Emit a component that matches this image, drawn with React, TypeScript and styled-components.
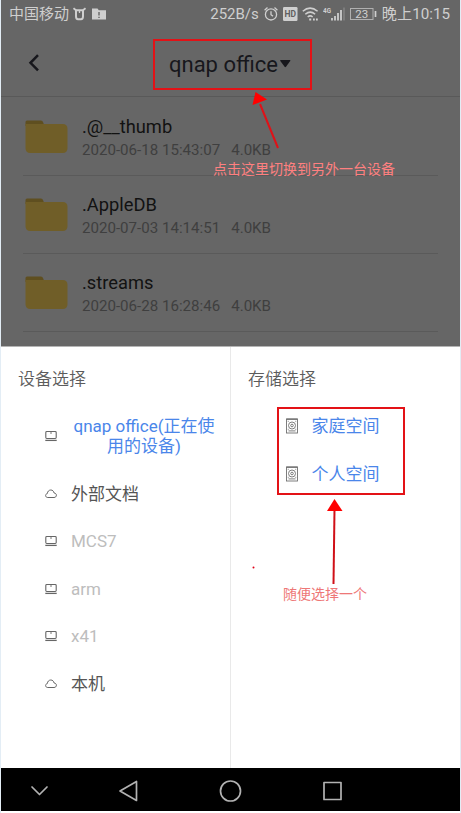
import React from 'react';
import styled, { createGlobalStyle } from 'styled-components';

const GlobalStyle = createGlobalStyle`
  * { box-sizing: border-box; }
  body {
    margin: 0;
    background: #fff;
    font-family: Roboto, "Noto Sans CJK SC", sans-serif;
  }
`;

const Screen = styled.div`
  position: relative;
  display: flex;
  flex-direction: column;
  width: 461px;
  height: 813px;
  padding-bottom: 2px;
  border-left: 1px solid #e3edf5;
  border-right: 1px solid #e3edf5;
  overflow: hidden;
`;

const StatusBar = styled.div`
  display: flex;
  align-items: center;
  justify-content: space-between;
  flex: 0 0 28px;
  padding: 0 10px 0 8px;
  background: #666;
  color: #cfcfcf;
  font-size: 15px;
  line-height: 28px;
  white-space: nowrap;
`;

const StatusGroup = styled.div`
  display: flex;
  align-items: center;
  height: 28px;
`;

const StatusIcon = styled.svg<{ $gap: number }>`
  flex: none;
  margin-left: ${(p) => p.$gap}px;
`;

const Clock = styled.span`
  margin-left: 5px;
  font-size: 15.2px;
`;

const Header = styled.header`
  display: flex;
  align-items: center;
  flex: 0 0 69px;
  padding: 2px 0 0 26px;
  background: #666;
  border-bottom: 1px solid #595959;
`;

const Title = styled.div`
  display: flex;
  align-items: center;
  gap: 2px;
  margin-left: 128px;
  padding-top: 3px;
  color: #17171c;
  font-size: 22px;
  line-height: 28px;
  white-space: nowrap;
  svg { margin-bottom: 2px; }
`;

const FileList = styled.div`
  flex: 0 0 249px;
  padding: 0 22px;
  background: #666;
`;

const FileRow = styled.div`
  display: flex;
  height: 78px;
  padding: 0 2px;
  border-bottom: 1px solid #5a5a5a;
  &:first-child { height: 79px; }
  &:first-child > * { margin-top: 1px; }
`;

const Folder = styled.svg`
  flex: none;
`;

const FileText = styled.div`
  padding: 18px 0 0 14px;
`;

const FileName = styled.div`
  color: #121212;
  font-size: 18.3px;
  line-height: 22px;
`;

const FileMeta = styled.div`
  display: flex;
  gap: 11px;
  margin-top: 2px;
  color: #3f3f3f;
  font-size: 15.1px;
  line-height: 20px;
`;

const Sheet = styled.div`
  display: flex;
  flex: 0 0 422px;
  background: #fff;
  border-top: 1px solid #b4b4b4;
`;

const Column = styled.section<{ $width: number }>`
  width: ${(p) => p.$width}px;
  padding: 20px 0 0 17px;
  & + & { border-left: 1px solid #e9e9e9; }
`;

const Heading = styled.h2`
  margin: 0;
  color: #5c5c5c;
  font-weight: 350;
  font-size: 17px;
  line-height: 24px;
`;

const Options = styled.div<{ $indent: number; $top: number; $gap: number }>`
  display: flex;
  flex-direction: column;
  padding: ${(p) => p.$top}px 0 0 ${(p) => p.$indent}px;
  gap: ${(p) => p.$gap}px;
`;

const tones = { active: '#4a86ea', normal: '#555', offline: '#bdbdbd' };

const Option = styled.div<{ $gap: number; $tone: keyof typeof tones }>`
  display: flex;
  align-items: center;
  gap: ${(p) => p.$gap}px;
  color: ${(p) => tones[p.$tone]};
  font-size: 17px;
  line-height: 20px;
  svg { flex: none; }
`;

const Label = styled.span<{ $wrap?: boolean }>`
  ${(p) => (p.$wrap ? 'width: 146px; text-align: center; word-break: break-all;' : 'white-space: nowrap;')}
`;

const NavBar = styled.nav`
  display: flex;
  align-items: center;
  flex: 0 0 43px;
  padding: 3px 0 0 28px;
  background: #000;
`;

const NavIcon = styled.svg<{ $gap?: number }>`
  margin-left: ${(p) => p.$gap ?? 0}px;
  fill: none;
  stroke: #b2b2b2;
  stroke-width: 1.7;
  stroke-linejoin: round;
  stroke-linecap: round;
`;

const Frame = styled.div<{ $x: number; $y: number; $w: number; $h: number }>`
  position: absolute;
  left: ${(p) => p.$x - 1}px;
  top: ${(p) => p.$y}px;
  width: ${(p) => p.$w}px;
  height: ${(p) => p.$h}px;
  border: 2px solid #e31217;
`;

const Note = styled.div<{ $x: number; $y: number; $color: string }>`
  position: absolute;
  left: ${(p) => p.$x - 1}px;
  top: ${(p) => p.$y}px;
  color: ${(p) => p.$color};
  font-size: 14px;
  line-height: 20px;
  white-space: nowrap;
`;

const Arrows = styled.svg`
  position: absolute;
  left: -1px;
  top: 0;
  pointer-events: none;
`;

const FolderIcon = () => (
  <Folder width="43" height="77" viewBox="0 0 43 77">
    <path d="M.5 24q0-1.500 1.500-1.500h14q1.500 0 2 1.500l1.500 4H.5z" fill="#5f4f20" />
    <path d="M.5 26h37q5 0 5 5v19q0 5-5 5h-32q-5 0-5-5z" fill="#705e28" />
  </Folder>
);

const ComputerIcon = () => (
  <svg width="12" height="12" viewBox="0 0 12 12" fill="none" stroke="#666">
    <rect x="0.800" y="1.500" width="10.400" height="7" rx="0.900" strokeWidth="1.100" />
    <path d="M0.300 10.400h11.400" strokeWidth="1.300" />
    <path d="M6 2v2" strokeWidth="0.900" />
  </svg>
);

const CloudIcon = () => (
  <svg width="12" height="12" viewBox="0 0 12 12" fill="none" stroke="#666">
    <path d="M2.800 9.500C1.400 9.500.6 8.600.6 7.500c0-1 .7-1.700 1.700-1.900C2.500 3.400 4 2 5.800 2c1.700 0 2.900 1.200 3.300 3 1.400.2 2.300 1 2.300 2.200 0 1.400-1 2.300-2.400 2.300z" />
  </svg>
);

const DiskIcon = () => (
  <svg width="12" height="16" viewBox="0 0 12 16" fill="none" stroke="#707070">
    <rect x="0.500" y="1" width="11" height="14" strokeWidth="0.900" />
    <path d="M0.500 1.200h11" strokeWidth="1.300" />
    <circle cx="6" cy="7.500" r="3.500" strokeWidth="0.900" />
    <circle cx="6" cy="7.500" r="1.300" strokeWidth="0.900" />
    <path d="M2.500 12.900h7" strokeWidth="0.900" />
    <path d="M1.800 3.300h.8M9.400 3.300h.8M1.800 11.300h.8M9.400 11.300h.8" />
  </svg>
);

const files = [
  { name: '.@__thumb', date: '2020-06-18 15:43:07' },
  { name: '.AppleDB', date: '2020-07-03 14:14:51' },
  { name: '.streams', date: '2020-06-28 16:28:46' },
];

const devices: { name: string; cloud?: boolean; tone: keyof typeof tones }[] = [
  { name: 'qnap office(正在使用的设备)', tone: 'active' },
  { name: '外部文档', cloud: true, tone: 'normal' },
  { name: 'MCS7', tone: 'offline' },
  { name: 'arm', tone: 'offline' },
  { name: 'x41', tone: 'offline' },
  { name: '本机', cloud: true, tone: 'normal' },
];

export default function App() {
  return (
    <>
      <GlobalStyle />
      <Screen>
        <StatusBar>
          <StatusGroup>
            <span>中国移动</span>
            <StatusIcon $gap={4} width="13" height="14" viewBox="0 0 13 14" fill="none" stroke="#cfcfcf">
              <path d="M3 3.200h7v6q0 3-2 3H5q-2 0-2-3z" strokeWidth="2" />
              <path d="M.5 1.200l2.500 2M12.500 1.200l-2.500 2" strokeWidth="1.800" />
              <path d="M6.500 3v3" strokeWidth="1.300" />
            </StatusIcon>
            <StatusIcon $gap={6} width="14" height="12" viewBox="0 0 14 12">
              <path d="M0 .5h5.500l1.300 1.800H14V11.500H0z" fill="#cfcfcf" />
              <path d="M7 4v3.500M7 8.700v1.300" stroke="#666" strokeWidth="1.400" />
            </StatusIcon>
          </StatusGroup>
          <StatusGroup>
            <span>252B/s</span>
            <StatusIcon $gap={5} width="14" height="14" viewBox="0 0 14 14" fill="none" stroke="#cfcfcf" strokeWidth="1.300">
              <circle cx="7" cy="7.400" r="5.600" />
              <path d="M7 4.300v3.400l2 1.400M.6 3.300L3.500.6M13.400 3.300L10.500.6" />
            </StatusIcon>
            <StatusIcon $gap={5} width="15" height="14" viewBox="0 0 15 14">
              <rect width="14.500" height="14" rx="1.200" fill="#cfcfcf" />
              <text x="7.250" y="10.200" textAnchor="middle" fontSize="8.500" fontWeight="700" fill="#606060">HD</text>
            </StatusIcon>
            <StatusIcon $gap={4} width="17" height="14" viewBox="0 0 17 14" fill="none" stroke="#cfcfcf" strokeWidth="1.500">
              <path d="M.8 4.300q7.200-6.400 14.800 0M3.300 7.300q5-4.400 9.800 0M5.700 10q2.500-2.200 5 0" />
              <path d="M7.200 12.500h2M11 12.500h1.800M14 12.500h1.800" strokeWidth="1.900" />
            </StatusIcon>
            <StatusIcon $gap={4} width="23" height="18" viewBox="0 0 23 18">
              <text x="0" y="7.500" fontSize="8" fontWeight="700" fill="#cfcfcf" textLength="8" lengthAdjust="spacingAndGlyphs">4G</text>
              <path d="M9 13v2.500M12 11v4.500M15 8v7.500M18 5v10.500" stroke="#cfcfcf" strokeWidth="1.800" />
              <path d="M21 2.500v13" stroke="#898989" strokeWidth="1.300" />
            </StatusIcon>
            <StatusIcon $gap={4} width="27" height="14" viewBox="0 0 27 14" fill="none" stroke="#b0b0b0">
              <rect x=".5" y="1.500" width="22.500" height="11" />
              <path d="M25.500 4v6" stroke="#cfcfcf" strokeWidth="1.700" />
              <text x="11.700" y="11.200" textAnchor="middle" fontSize="11.500" fill="#cfcfcf" stroke="none">23</text>
            </StatusIcon>
            <Clock>晚上10:15</Clock>
          </StatusGroup>
        </StatusBar>
        <Header>
          <svg width="14" height="20" viewBox="0 0 14 20" fill="none" stroke="#17171c" strokeWidth="2.500">
            <path d="M11 2.200L3.500 9.800l7.500 7.600" />
          </svg>
          <Title>
            qnap office
            <svg width="11" height="10" viewBox="0 0 11 10"><path d="M.5 1h9.500q.6.200.2.900L6 7.800q-.7.800-1.400 0L.3 1.900Q0 1.200.5 1z" fill="#17171c" /></svg>
          </Title>
        </Header>
        <FileList>
          {files.map((f) => (
            <FileRow key={f.name}>
              <FolderIcon />
              <FileText>
                <FileName>{f.name}</FileName>
                <FileMeta><span>{f.date}</span><span>4.0KB</span></FileMeta>
              </FileText>
            </FileRow>
          ))}
        </FileList>
        <Sheet>
          <Column $width={229}>
            <Heading>设备选择</Heading>
            <Options $indent={27} $top={25} $gap={27.6}>
              {devices.map((d, i) => (
                <Option key={d.name} $gap={14} $tone={d.tone}>
                  {d.cloud ? <CloudIcon /> : <ComputerIcon />}
                  <Label $wrap={i === 0}>{d.name}</Label>
                </Option>
              ))}
            </Options>
          </Column>
          <Column $width={230}>
            <Heading>存储选择</Heading>
            <Options $indent={38} $top={25} $gap={27.6}>
              {['家庭空间', '个人空间'].map((name) => (
                <Option key={name} $gap={13.5} $tone="active"><DiskIcon /><Label>{name}</Label></Option>
              ))}
            </Options>
          </Column>
        </Sheet>
        <NavBar>
          <NavIcon width="20" height="24" viewBox="0 0 20 24"><path d="M3 8l7.500 7.500L18 8" /></NavIcon>
          <NavIcon $gap={67} width="24" height="24" viewBox="0 0 24 24"><path d="M20.500 2.500v19L4 12z" /></NavIcon>
          <NavIcon $gap={78} width="24" height="24" viewBox="0 0 24 24"><circle cx="12.500" cy="12" r="10" /></NavIcon>
          <NavIcon $gap={78} width="24" height="24" viewBox="0 0 24 24"><rect x="4" y="3.500" width="17" height="17" /></NavIcon>
        </NavBar>
        <Frame $x={153} $y={39} $w={159} $h={51} />
        <Frame $x={277} $y={407} $w={128} $h={88} />
        <Arrows width="461" height="813" viewBox="0 0 461 813">
          <path d="M260 104L278 148" stroke="#df1218" strokeWidth="2" />
          <path d="M255.500 92L267 99.500L252.500 105z" fill="#f00" />
          <path d="M334.500 509L333.500 584" stroke="#d01018" strokeWidth="2" />
          <path d="M334.500 499L342.500 511H327z" fill="#f00" />
          <circle cx="253.500" cy="567.500" r="1" fill="#e00018" />
        </Arrows>
        <Note $x={213} $y={159} $color="#ff8080">点击这里切换到另外一台设备</Note>
        <Note $x={283} $y={584} $color="#ee7777">随便选择一个</Note>
      </Screen>
    </>
  );
}
